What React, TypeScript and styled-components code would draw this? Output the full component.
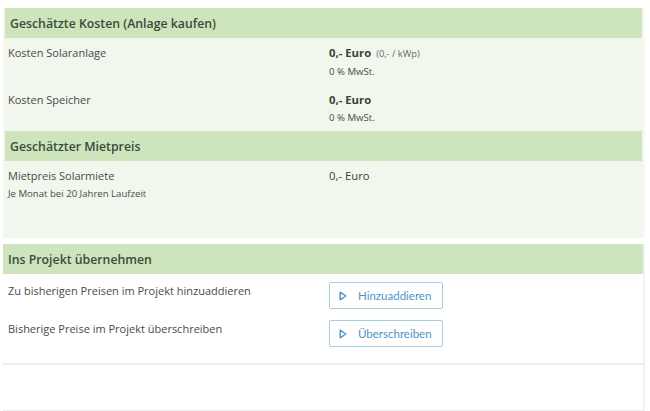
import React from "react";
import styled, { createGlobalStyle } from "styled-components";

const Global = createGlobalStyle`
  html, body { margin: 0; padding: 0; background: #ffffff; }
  body { font-family: "Open Sans", "Noto Sans", sans-serif; color: #454545; }
`;

const Page = styled.div`
  padding: 8px 5px 0 3px;
  width: 650px;
  box-sizing: border-box;
  display: flex;
  flex-direction: column;
`;

const Card = styled.section<{ $tint?: boolean; $gap?: number }>`
  background: ${(p) => (p.$tint ? "#f1f7ec" : "#ffffff")};
  border-right: 2px solid ${(p) => (p.$tint ? "#f6f9f3" : "#f2f2f2")};
  border-bottom: ${(p) => (p.$tint ? "0" : "2px solid #ececec")};
  margin-bottom: ${(p) => p.$gap ?? 0}px;
  display: flex;
  flex-direction: column;
`;

const Header = styled.div<{ $inset?: boolean }>`
  height: 30px;
  background: #cde4bc;
  margin-left: ${(p) => (p.$inset ? 2 : 0)}px;
  margin-right: ${(p) => (p.$inset ? 1 : 0)}px;
  padding: 0 5px;
  display: flex;
  align-items: center;
  font-size: 12.3px;
  font-weight: 600;
  color: #3d4a3a;
`;

const Row = styled.div<{ $pt?: number; $pb?: number }>`
  display: grid;
  grid-template-columns: 1fr 1fr;
  padding: ${(p) => p.$pt ?? 6}px 0 ${(p) => p.$pb ?? 4}px;
`;

const Cell = styled.div`
  padding: 0 5px;
  display: flex;
  flex-direction: column;
  align-items: flex-start;
  & + & { padding-left: 6px; }
`;

const Label = styled.div`
  font-size: 11px;
  line-height: 18px;
  color: #4a4a4a;
`;

const Sub = styled.div`
  font-size: 9.6px;
  line-height: 18px;
  color: #4a4a4a;
`;

const Value = styled.div<{ $bold?: boolean }>`
  font-size: 11.3px;
  line-height: 18px;
  font-weight: ${(p) => (p.$bold ? 700 : 400)};
  color: #3e3e3e;
`;

const Hint = styled.span`
  font-size: 9.3px;
  font-weight: 400;
  color: #6a6a6a;
  margin-left: 5px;
`;

const Button = styled.button`
  width: 114px;
  height: 27px;
  box-sizing: border-box;
  border: 1px solid #a6cfe1;
  border-radius: 2px;
  background: #ffffff;
  color: #4c93c4;
  font-family: Lato, "Open Sans", sans-serif;
  font-size: 11.5px;
  display: flex;
  align-items: center;
  gap: 11px;
  padding: 0 0 0 9px;
  cursor: pointer;
`;

const Play = () => (
  <svg width="8" height="10" viewBox="0 0 8 10">
    <path d="M1.2 1.2 L6.8 5 L1.2 8.8 Z" fill="none" stroke="#4c93c4" strokeWidth="1.4" strokeLinejoin="round" />
  </svg>
);

export default function App() {
  return (
    <>
      <Global />
      <Page>
        <Card $tint $gap={6}>
          <Header $inset>Geschätzte Kosten (Anlage kaufen)</Header>
          <Row>
            <Cell><Label>Kosten Solaranlage</Label></Cell>
            <Cell>
              <Value $bold>0,- Euro<Hint>(0,- / kWp)</Hint></Value>
              <Sub>0 % MwSt.</Sub>
            </Cell>
          </Row>
          <Row>
            <Cell><Label>Kosten Speicher</Label></Cell>
            <Cell>
              <Value $bold>0,- Euro</Value>
              <Sub>0 % MwSt.</Sub>
            </Cell>
          </Row>
          <Header $inset>Geschätzter Mietpreis</Header>
          <Row $pb={35}>
            <Cell>
              <Label>Mietpreis Solarmiete</Label>
              <Sub>Je Monat bei 20 Jahren Laufzeit</Sub>
            </Cell>
            <Cell><Value>0,- Euro</Value></Cell>
          </Row>
        </Card>
        <Card>
          <Header>Ins Projekt übernehmen</Header>
          <Row $pt={8} $pb={3}>
            <Cell><Label>Zu bisherigen Preisen im Projekt hinzuaddieren</Label></Cell>
            <Cell><Button><Play />Hinzuaddieren</Button></Cell>
          </Row>
          <Row $pt={8} $pb={16}>
            <Cell><Label>Bisherige Preise im Projekt überschreiben</Label></Cell>
            <Cell><Button><Play />Überschreiben</Button></Cell>
          </Row>
        </Card>
        <Card style={{ height: 45 }} />
      </Page>
    </>
  );
}
